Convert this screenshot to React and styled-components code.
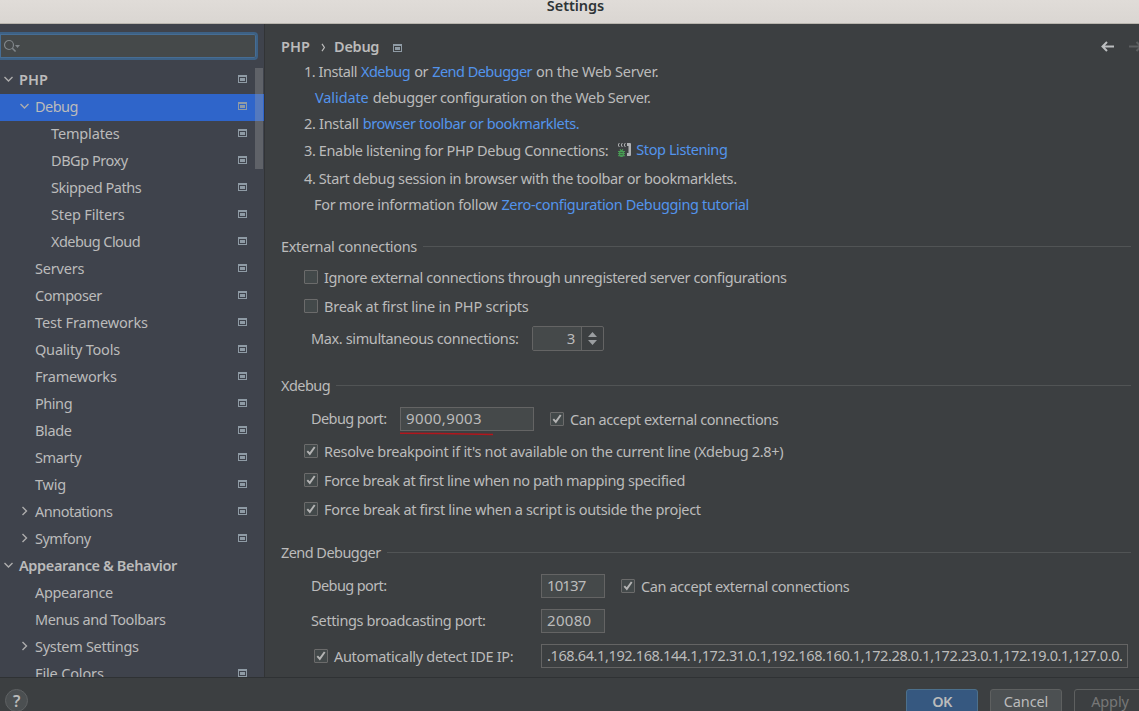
import React from 'react';
import styled, { createGlobalStyle } from 'styled-components';

const Global = createGlobalStyle`
  * { box-sizing: border-box; }
  body { margin: 0; background: #3c3f41; overflow: hidden; }
`;

const Window = styled.div`
  display: flex;
  flex-direction: column;
  width: 100vw;
  height: 711px;
  overflow: hidden;
  background: #3c3f41;
  color: #bbbbbb;
  font: 14.5px 'Noto Sans', 'Open Sans', sans-serif;
  letter-spacing: -0.35px;
  white-space: pre;
`;

const TitleBar = styled.header`
  flex: none;
  height: 24px;
  padding-left: 12px;
  text-align: center;
  line-height: 10px;
  font-weight: 600;
  font-size: 14.5px;
  letter-spacing: -0.05px;
  color: #2e3436;
  background: linear-gradient(#e0dcd8, #dad6d2);
  border-bottom: 1px solid #b9b5ae;
`;

const Body = styled.div`
  flex: none;
  display: flex;
  height: 653px;
`;

const Sidebar = styled.aside`
  flex: none;
  width: 265px;
  height: 653px;
  overflow: hidden;
  background: #3f434c;
  border-right: 1px solid #323436;
`;

const Search = styled.div`
  display: flex;
  align-items: center;
  width: 258px;
  height: 28px;
  margin: 8px 0 7px;
  padding-left: 4px;
  background: #45494a;
  border: 2px solid #3d6185;
  border-left: 0;
  border-radius: 0 4px 4px 0;
  box-shadow: inset 0 0 0 1px #466d94;
`;

const TreeArea = styled.div`
  position: relative;
`;

const Scrollbar = styled.div`
  position: absolute;
  top: 1px;
  right: 1px;
  width: 8px;
  height: 101px;
  background: rgba(166, 166, 166, 0.32);
`;

const TreeRow = styled.div`
  display: flex;
  align-items: center;
  height: 27px;
  padding: 0 17px 3px ${(p) => 3 + p.$level * 16}px;
  background: ${(p) => (p.$selected ? '#2f65ca' : 'transparent')};
  font-weight: ${(p) => (p.$level === 0 ? 600 : 400)};
`;

const Arrow = styled.span`
  flex: none;
  display: flex;
  width: 12px;
  margin-right: 4px;
`;

const TreeLabel = styled.span`
  flex: 1;
  letter-spacing: ${(p) => p.$ls}px;
`;

const Main = styled.main`
  flex: 1;
  min-width: 0;
  padding-left: 16px;
`;

const Crumbs = styled.div`
  display: flex;
  align-items: center;
  height: 35px;
  padding-top: 11px;
  color: #bbbbbb;
  font-weight: 600;
`;

const CrumbArrow = styled.span`
  display: flex;
  justify-content: center;
  width: 24px;
  padding-left: 3px;
`;

const ProjectMark = styled.span`
  display: flex;
  flex: 1;
  margin: 1px 0 0 14px;
`;

const Step = styled.div`
  display: flex;
  align-items: center;
  gap: 4px;
  height: ${(p) => p.$h || 26}px;
  padding-left: ${(p) => p.$indent || 23}px;
`;

const Text = styled.span`
  display: inline-block;
  margin-bottom: ${(p) => (p.$lift === undefined ? 2 : p.$lift)}px;
  letter-spacing: ${(p) => (p.$ls === undefined ? -0.35 : p.$ls)}px;
`;

const Link = styled(Text)`
  color: #5394ec;
`;

const ListenIcon = styled.span`
  display: flex;
  margin: 0 0 2px 5px;
`;

const SectionTitle = styled.h2`
  display: flex;
  align-items: center;
  gap: 6px;
  height: 24px;
  margin: 17px 8px ${(p) => p.$after}px 0;
  font-size: inherit;
  font-weight: 400;
  &::after {
    content: '';
    flex: 1;
    height: 1px;
    margin-bottom: 1px;
    background: #515455;
  }
`;

const FieldRow = styled.div`
  display: flex;
  align-items: center;
  height: ${(p) => p.$h}px;
  padding-left: ${(p) => p.$indent || 30}px;
  padding-bottom: ${(p) => (p.$raise ? 1 : 0)}px;
`;

const FieldLabel = styled.div`
  flex: none;
  width: ${(p) => p.$w}px;
  padding-top: ${(p) => p.$drop || 0}px;
`;

const CheckLabel = styled.label`
  display: flex;
  align-items: center;
  gap: 6px;
  margin-left: ${(p) => p.$gap || 0}px;
`;

const Box = styled.span`
  display: flex;
  align-items: center;
  justify-content: center;
  flex: none;
  width: 14px;
  height: 14px;
  margin-bottom: 1px;
  background: #43494a;
  border: 1px solid #6b6b6b;
  border-radius: 1px;
`;

const Field = styled.div`
  position: relative;
  flex: none;
  width: ${(p) => p.$w}px;
  height: 24px;
  padding: 0 5px;
  line-height: 20px;
  font-size: ${(p) => p.$size || 15}px;
  letter-spacing: ${(p) => p.$ls}px;
  background: ${(p) => (p.$disabled ? '#3c3f41' : '#45494a')};
  border: 1px solid #646464;
`;

const Clip = styled.div`
  overflow: hidden;
`;

const Underline = styled.svg`
  position: absolute;
  left: -1px;
  top: 23px;
`;

const Spinner = styled.div`
  display: flex;
  width: 72px;
  height: 25px;
  border: 1px solid #646464;
  border-radius: 2px;
`;

const SpinnerValue = styled.div`
  width: 49px;
  padding-right: 6px;
  text-align: right;
  line-height: 22px;
  font-size: 15px;
  background: #45494a;
  border-right: 1px solid #646464;
`;

const SpinnerArrows = styled.div`
  display: flex;
  flex: 1;
  align-items: center;
  justify-content: center;
`;

const Footer = styled.footer`
  display: flex;
  flex: none;
  align-items: flex-start;
  gap: 12px;
  height: 34px;
  padding: 11px 0 0 5px;
  overflow: hidden;
  border-top: 1px solid #2f3234;
`;

const Help = styled.div`
  display: flex;
  align-items: center;
  justify-content: center;
  flex: none;
  width: 23px;
  height: 23px;
  margin: 0 866px 0 0;
  font-size: 16px;
  font-weight: 600;
  background: #4b4f51;
  border: 1px solid #5e6163;
  border-radius: 50%;
`;

const Button = styled.div`
  flex: none;
  width: 72px;
  height: 27px;
  line-height: 23px;
  text-align: center;
  letter-spacing: ${(p) => (p.$kind === 'primary' ? -0.6 : -0.1)}px;
  border-radius: 3px;
  border: 1px solid ${(p) => (p.$kind === 'primary' ? '#4c708c' : '#5e6060')};
  background: ${(p) => ({ primary: '#365880', plain: '#4c5052', disabled: 'transparent' })[p.$kind]};
  color: ${(p) => (p.$kind === 'disabled' ? '#777777' : '#bbbbbb')};
  font-weight: ${(p) => (p.$kind === 'primary' ? 600 : 400)};
`;

const ScopeIcon = () => (
  <svg width="9" height="8" viewBox="0 0 9 8" shapeRendering="crispEdges">
    <path d="M0 0H9V8H0ZM1 2V7H8V2Z" fill="#8f9ba5" fillRule="evenodd" />
    <path d="M2 3H7V6H2Z" fill="#8f9ba5" />
  </svg>
);

const Chevron = ({ open }) => (
  <svg width="10" height="10" viewBox="0 0 10 10" fill="none" stroke="#adadad" strokeWidth="1.4">
    <path d={open ? 'M1.5 3L5.5 7L9.5 3' : 'M3.5 1L7.5 5L3.5 9'} />
  </svg>
);

const SearchIcon = () => (
  <svg width="18" height="14" viewBox="0 0 18 14" fill="none" stroke="#80868a" strokeWidth="1.2">
    <circle cx="5" cy="6" r="4.5" />
    <path d="M8.3 9.2L11.6 12.5" strokeWidth="1.6" />
    <path d="M11 6H16L13.5 9Z" fill="#80868a" stroke="none" />
  </svg>
);

const PhoneBug = () => (
  <svg width="15" height="16" viewBox="0 0 15 16">
    <path d="M2.3 1Q0.3 3 2.3 5M5.3 1Q3.3 3 5.3 5M8.3 1Q6.3 3 8.3 5" fill="none" stroke="#afb1b3" strokeWidth="1" />
    <path d="M10 1H13Q14 1 14 2V13Q14 14 13 14H10V11H11.5V4H10Z" fill="#afb1b3" />
    <ellipse cx="4.5" cy="11.5" rx="2.5" ry="3.6" fill="#499c54" />
    <path d="M1 9.5H8M1 11.6H8M1 13.7H8M3 7L4 8.5M6 7L5 8.5" stroke="#499c54" fill="none" />
    <path d="M3.2 10.5H5.8M3.2 12.6H5.8" stroke="#35553a" strokeWidth=".8" />
  </svg>
);

const NavArrows = () => (
  <svg width="38" height="12" viewBox="0 0 38 12" fill="none" strokeWidth="2">
    <path d="M13 5.5H2M6 1L1.5 5.5L6 10" stroke="#bcbec0" />
    <path d="M28 5.5H39M35.5 1L40 5.5L35.5 10" stroke="#5c5f61" />
  </svg>
);

const Check = ({ checked, gap, ls, lift, children }) => (
  <CheckLabel $gap={gap}>
    <Box>
      {checked && (
        <svg width="12" height="12" viewBox="0 0 12 12" fill="none" stroke="#b4b4b4" strokeWidth="1.9">
          <path d="M2.3 6.2L4.8 8.9L9.7 2" />
        </svg>
      )}
    </Box>
    <Text $ls={ls} $lift={lift}>{children}</Text>
  </CheckLabel>
);

const tree = [
  { label: 'PHP', level: 0, open: true, mark: true, ls: 0.1 },
  { label: 'Debug', level: 1, open: true, mark: true, selected: true, ls: -0.55 },
  { label: 'Templates', level: 2, mark: true, ls: -0.15 },
  { label: 'DBGp Proxy', level: 2, mark: true, ls: -0.45 },
  { label: 'Skipped Paths', level: 2, mark: true, ls: -0.45 },
  { label: 'Step Filters', level: 2, mark: true, ls: -0.15 },
  { label: 'Xdebug Cloud', level: 2, mark: true, ls: -0.55 },
  { label: 'Servers', level: 1, mark: true, ls: -0.2 },
  { label: 'Composer', level: 1, mark: true, ls: -0.45 },
  { label: 'Test Frameworks', level: 1, mark: true, ls: -0.13 },
  { label: 'Quality Tools', level: 1, mark: true, ls: -0.2 },
  { label: 'Frameworks', level: 1, mark: true, ls: -0.2 },
  { label: 'Phing', level: 1, mark: true, ls: -0.45 },
  { label: 'Blade', level: 1, mark: true },
  { label: 'Smarty', level: 1, mark: true },
  { label: 'Twig', level: 1, mark: true, ls: -0.2 },
  { label: 'Annotations', level: 1, open: false, mark: true, ls: -0.5 },
  { label: 'Symfony', level: 1, open: false, mark: true, ls: -0.5 },
  { label: 'Appearance & Behavior', level: 0, open: true, ls: -0.37 },
  { label: 'Appearance', level: 1 },
  { label: 'Menus and Toolbars', level: 1, ls: -0.42 },
  { label: 'System Settings', level: 1, open: false, ls: -0.3 },
  { label: 'File Colors', level: 1, mark: true, ls: -0.15 },
];

export default function App() {
  return (
    <Window>
      <Global />
      <TitleBar>Settings</TitleBar>
      <Body>
        <Sidebar>
          <Search><SearchIcon /></Search>
          <TreeArea>
            {tree.map((n) => (
              <TreeRow key={n.label} $level={n.level} $selected={n.selected}>
                <Arrow>{n.open !== undefined && <Chevron open={n.open} />}</Arrow>
                <TreeLabel $ls={n.ls === undefined ? -0.35 : n.ls}>{n.label}</TreeLabel>
                {n.mark && <ScopeIcon />}
              </TreeRow>
            ))}
            <Scrollbar />
          </TreeArea>
        </Sidebar>
        <Main>
          <Crumbs>
            <Text $ls={0.1}>PHP</Text>
            <CrumbArrow>
              <svg width="5" height="9" viewBox="0 0 5 9" fill="none" stroke="#bbbbbb" strokeWidth="1.2">
                <path d="M1 0.8L3.4 4.5L1 8.2" />
              </svg>
            </CrumbArrow>
            <Text $ls={-0.3}>Debug</Text>
            <ProjectMark><ScopeIcon /></ProjectMark>
            <NavArrows />
          </Crumbs>
          <Step>
            <Text $ls={-0.46}>1. Install</Text>
            <Link $ls={-0.55}>Xdebug</Link>
            <Text>or</Text>
            <Link $ls={-0.53}>Zend Debugger</Link>
            <Text $ls={-0.25}>on the Web Server.</Text>
          </Step>
          <Step $indent={34}>
            <Link $ls={-0.1}>Validate</Link>
            <Text $ls={-0.38}>debugger configuration on the Web Server.</Text>
          </Step>
          <Step>
            <Text $ls={-0.3}>2. Install</Text>
            <Link $ls={-0.38}>browser toolbar or bookmarklets.</Link>
          </Step>
          <Step $h={28}>
            <Text $ls={-0.37}>3. Enable listening for PHP Debug Connections:</Text>
            <ListenIcon><PhoneBug /></ListenIcon>
            <Link $ls={-0.42} $lift={4}>Stop Listening</Link>
          </Step>
          <Step $h={27}>
            <Text $ls={-0.39}>4. Start debug session in browser with the toolbar or bookmarklets.</Text>
          </Step>
          <Step $indent={33}>
            <Text $ls={-0.31}>For more information follow</Text>
            <Link $ls={-0.36}>Zero-configuration Debugging tutorial</Link>
          </Step>

          <SectionTitle $after={4}><Text $ls={-0.31}>External connections</Text></SectionTitle>
          <FieldRow $h={29} $indent={23}>
            <Check ls={-0.405}>Ignore external connections through unregistered server configurations</Check>
          </FieldRow>
          <FieldRow $h={29} $indent={23}>
            <Check ls={-0.23}>Break at first line in PHP scripts</Check>
          </FieldRow>
          <FieldRow $h={36} $raise>
            <FieldLabel $w={221}><Text $ls={-0.38}>Max. simultaneous connections:</Text></FieldLabel>
            <Spinner>
              <SpinnerValue>3</SpinnerValue>
              <SpinnerArrows>
                <svg width="9" height="13" viewBox="0 0 9 13" fill="#9a9da0">
                  <path d="M0 5L4.5 0L9 5ZM0 8H9L4.5 13Z" />
                </svg>
              </SpinnerArrows>
            </Spinner>
          </FieldRow>

          <SectionTitle $after={3}><Text $ls={-0.55}>Xdebug</Text></SectionTitle>
          <FieldRow $h={36}>
            <FieldLabel $w={89}><Text $ls={-0.6}>Debug port:</Text></FieldLabel>
            <Field $w={134} $ls={0.37}>
              9000,9003
              <Underline width="94" height="5" viewBox="0 0 94 5">
                <path d="M0 2.2L40 2.4L93 3.5" fill="none" stroke="#b3161d" strokeWidth="1.5" />
              </Underline>
            </Field>
            <Check checked gap={16} ls={-0.38} lift={0}>Can accept external connections</Check>
          </FieldRow>
          <FieldRow $h={29} $indent={23}>
            <Check checked ls={-0.325}>Resolve breakpoint if it's not available on the current line (Xdebug 2.8+)</Check>
          </FieldRow>
          <FieldRow $h={29} $indent={23}>
            <Check checked ls={-0.39}>Force break at first line when no path mapping specified</Check>
          </FieldRow>
          <FieldRow $h={29} $indent={23}>
            <Check checked ls={-0.325}>Force break at first line when a script is outside the project</Check>
          </FieldRow>

          <SectionTitle $after={4}><Text $ls={-0.55}>Zend Debugger</Text></SectionTitle>
          <FieldRow $h={35} $raise>
            <FieldLabel $w={230}><Text $ls={-0.6}>Debug port:</Text></FieldLabel>
            <Field $w={64} $ls={-0.9}>10137</Field>
            <Check checked gap={16} ls={-0.38} lift={0}>Can accept external connections</Check>
          </FieldRow>
          <FieldRow $h={35} $raise>
            <FieldLabel $w={230}><Text $ls={-0.38}>Settings broadcasting port:</Text></FieldLabel>
            <Field $w={64} $ls={0.3}>20080</Field>
          </FieldRow>
          <FieldRow $h={35} $indent={33} $raise>
            <FieldLabel $w={227} $drop={1}><Check checked ls={-0.31}>Automatically detect IDE IP:</Check></FieldLabel>
            <Field $w={587} $size={14.5} $ls={-0.38} $disabled>
              <Clip>.168.64.1,192.168.144.1,172.31.0.1,192.168.160.1,172.28.0.1,172.23.0.1,172.19.0.1,127.0.0.</Clip>
            </Field>
          </FieldRow>
        </Main>
      </Body>
      <Footer>
        <Help>?</Help>
        <Button $kind="primary">OK</Button>
        <Button $kind="plain">Cancel</Button>
        <Button $kind="disabled">Apply</Button>
      </Footer>
    </Window>
  );
}
